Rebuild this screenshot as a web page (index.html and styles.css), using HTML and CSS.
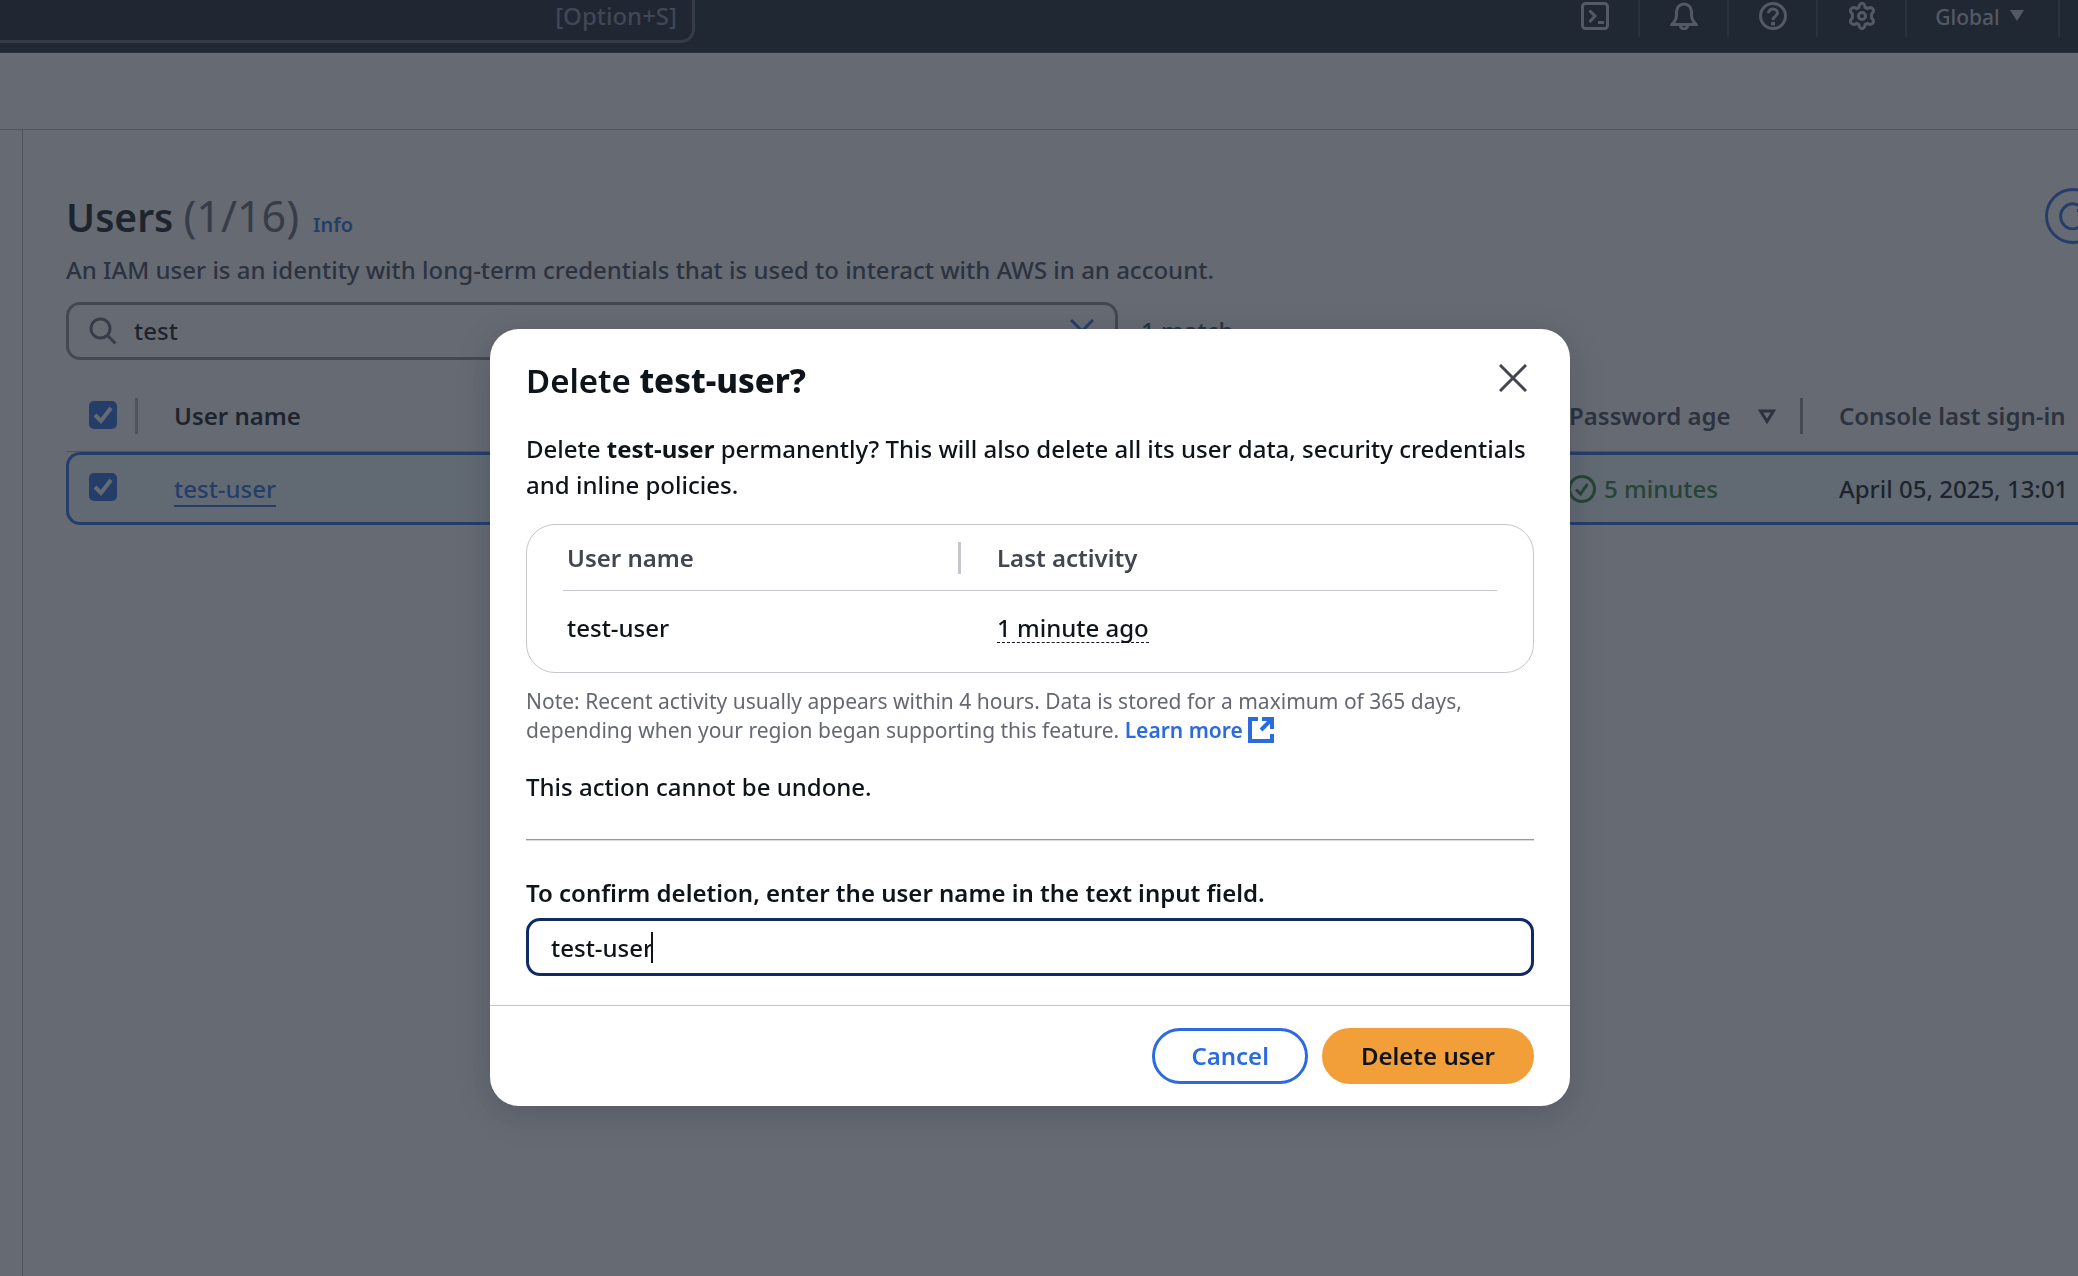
FILE: index.html
```html
<!DOCTYPE html>
<html lang="en">
<head>
<meta charset="utf-8">
<title>Users | IAM | Global</title>
<link rel="stylesheet" href="styles.css">
</head>
<body>
<header class="topbar">
  <div class="topsearch"><kbd>[Option+S]</kbd></div>
  <nav class="tools" aria-label="Console tools">
    <button class="tool" aria-label="CloudShell"><svg class="icon" viewBox="0 0 28 28"><rect x="1.5" y="1.5" width="25" height="25" rx="3"/><path d="M8.5 8.500l5.500 5.500-5.500 6M17 20.500h6"/></svg></button>
    <button class="tool" aria-label="Notifications"><svg class="icon" viewBox="0 0 28 28"><path d="M2 22.500c3-3 4.500-5 4.500-9.500v-3a7.500 8 0 0 1 15 0v3c0 4.500 1.500 6.500 4.500 9.500zM10.500 23.500a3.500 3.500 0 0 0 7 0"/></svg></button>
    <button class="tool" aria-label="Help"><svg class="icon" viewBox="0 0 28 28"><circle cx="14" cy="14" r="12.500"/><path d="M9.500 11.200c0-5.800 9.300-5.600 9 0-.2 3-4.500 3-4.500 7"/><path d="M14 20v3.500" stroke-width="4"/></svg></button>
    <button class="tool" aria-label="Settings"><svg class="icon" viewBox="0 0 28 28"><path d="M11.500 3q2.500-3.500 5 0l.6 2.400 2.200 1.100 2.400-.9q4.600.3 3.600 4.400l-1.700 2v4l1.700 2q1 4.100-3.600 4.400l-2.400-.9-2.200 1.100-.6 2.400q-2.500 3.500-5 0l-.6-2.400-2.200-1.100-2.400.9q-4.600-.3-3.600-4.400l1.700-2v-4l-1.700-2q-1-4.100 3.600-4.400l2.400.9 2.200-1.100z"/><circle cx="14" cy="14" r="3.500"/></svg></button>
    <button class="tool region">Global <svg class="caret-down" viewBox="0 0 14 11"><path d="M0 0h14L7 11z"/></svg></button>
  </nav>
</header>
<div class="crumbs"></div>
<div class="shell">
  <aside class="rail"></aside>
  <main class="main">
    <section class="panel">
      <div class="panel-head">
        <div>
          <div class="title-row">
            <h1>Users <span class="count">(1/16)</span></h1>
            <a class="info" href="#info">Info</a>
          </div>
          <p class="desc">An IAM user is an identity with long-term credentials that is used to interact with AWS in an account.</p>
        </div>
        <button class="refresh" aria-label="Refresh"><svg class="icon" viewBox="0 0 28 28"><path d="M25 18.500A12 12.500 0 1 1 24 8M25.500 1V8.500H18"/></svg></button>
      </div>
      <div class="filter">
        <div class="filter-box">
          <svg class="icon" viewBox="0 0 28 28"><circle cx="11.500" cy="11.500" r="9.500"/><path d="M18.500 18.500l8 8"/></svg>
          <input type="text" class="filter-input" aria-label="Find users" value="test">
          <button class="clear" aria-label="Clear"><svg class="icon" viewBox="0 0 28 28"><path d="M3 3l22 22M25 3L3 25"/></svg></button>
        </div>
        <span class="matches">1 match</span>
      </div>
      <table class="users">
        <colgroup><col class="c-sel"><col><col class="c-age"><col class="c-sign"></colgroup>
        <thead>
          <tr>
            <th><span class="cell cell-sel"><input type="checkbox" class="check" aria-label="Select all users" checked></span></th>
            <th class="sorted"><span class="cell">User name</span></th>
            <th><span class="cell cell-age">Password age <svg class="sort" viewBox="0 0 18 15"><path d="M2.500 2h13L9 12.500z"/></svg></span></th>
            <th><span class="cell">Console last sign-in</span></th>
          </tr>
        </thead>
        <tbody>
          <tr>
            <td class="sel"><input type="checkbox" class="check" aria-label="Select test-user" checked></td>
            <td><a class="user" href="#test-user">test-user</a></td>
            <td class="age"><span class="status"><svg class="icon" viewBox="0 0 28 28"><circle cx="14" cy="14" r="12.500"/><path d="M8 14.500l4.500 4.500 7-10"/></svg>5 minutes</span></td>
            <td>April 05, 2025, 13:01</td>
          </tr>
        </tbody>
      </table>
    </section>
  </main>
</div>

<div class="overlay">
  <div class="modal" role="dialog" aria-modal="true" aria-labelledby="modal-title">
    <div class="modal-head">
      <h2 id="modal-title">Delete <b>test-user?</b></h2>
      <button class="close" aria-label="Close"><svg class="icon" viewBox="0 0 28 28"><path d="M1 1l26 26M27 1L1 27"/></svg></button>
    </div>
    <div class="modal-body">
      <p>Delete <b>test-user</b> permanently? This will also delete all its user data, security credentials and inline policies.</p>
      <div class="card">
        <table class="activity">
          <thead><tr><th><span class="cell">User name</span></th><th>Last activity</th></tr></thead>
          <tbody><tr><td>test-user</td><td><span class="ago">1 minute ago</span></td></tr></tbody>
        </table>
      </div>
      <p class="note">Note: Recent activity usually appears within 4 hours. Data is stored for a maximum of 365 days, depending when your region began supporting this feature. <a class="learn" href="#learn">Learn more <svg class="ext" viewBox="0 0 26 26"><path d="M10 2H2v22h22v-7M14 2h10v10M24 2L13 13"/></svg></a></p>
      <p class="final">This action cannot be undone.</p>
      <hr class="rule">
      <label class="confirm-label" for="confirm">To confirm deletion, enter the user name in the text input field.</label>
      <div class="confirm-box">
        <input class="confirm" id="confirm" type="text" value="test-user">
        <span class="text-caret"></span>
      </div>
    </div>
    <div class="modal-foot">
      <button class="btn">Cancel</button>
      <button class="btn primary">Delete user</button>
    </div>
  </div>
</div>
</body>
</html>
```
FILE: styles.css
```css
* { box-sizing: border-box; }
body {
  margin: 0;
  height: 100vh;
  display: flex;
  flex-direction: column;
  overflow: hidden;
  background: #fff;
  color: #0f141a;
  font: 500 24px/36px "Noto Sans", "Open Sans", sans-serif;
}
h1, h2, p { margin: 0; }
button, input { font: inherit; color: inherit; }
button { padding: 0; border: 0; background: none; }
a { color: #2b6bdd; text-decoration: none; }
table { width: 100%; border-collapse: separate; border-spacing: 0; table-layout: fixed; }
th, td { padding: 0; text-align: left; white-space: nowrap; }
.icon { display: block; flex: none; width: 28px; height: 28px; fill: none; stroke: currentColor; stroke-width: 3; }

/* top navigation */
.topbar {
  display: flex;
  justify-content: space-between;
  align-items: flex-start;
  height: 53px;
  background: #1a222c;
  border-bottom: 1px solid #424650;
}
.topsearch {
  display: flex;
  justify-content: flex-end;
  align-items: center;
  width: 695px;
  height: 43px;
  padding-right: 15px;
  padding-bottom: 8px;
  border: solid #5f6470;
  border-width: 0 3px 3px 0;
  border-radius: 0 0 14px 0;
  background: #1a1d26;
}
.topsearch kbd { color: #85899a; font: inherit; }
.tools { display: flex; margin-right: 18px; }
.tool {
  display: flex;
  justify-content: center;
  width: 89px;
  height: 37px;
  padding-top: 2px;
  border-right: 2px solid #3c404b;
  color: #c6c6cd;
}
.region { width: 153px; padding-right: 6px; gap: 10px; font-size: 21px; line-height: 30px; }
.caret-down { width: 14px; height: 11px; margin-top: 8px; fill: currentColor; }
.crumbs { height: 77px; border-bottom: 1px solid #b4b4bb; }

/* page */
.shell { flex: 1; display: flex; min-height: 0; }
.rail { width: 23px; border-right: 1px solid #b4b4bb; }
.main { flex: 1; min-width: 0; overflow: hidden; }
.panel { margin: 58px -60px 0 43px; }
.panel-head { display: flex; justify-content: space-between; align-items: flex-start; padding-right: 37px; }
.title-row { display: flex; align-items: baseline; gap: 14px; height: 64px; }
h1 { font-size: 39px; line-height: 56px; font-weight: 650; }
.count { color: #656871; font-size: 43px; font-weight: 400; }
.info { font-size: 20px; font-weight: 650; }
.desc { color: #424650; }
.refresh {
  display: flex;
  align-items: center;
  justify-content: center;
  width: 56px;
  height: 56px;
  border: 3px solid #2b6bdd;
  border-radius: 50%;
  color: #2b6bdd;
}
.filter { display: flex; align-items: center; gap: 23px; margin-top: 14px; }
.filter-box {
  display: flex;
  align-items: center;
  gap: 17px;
  width: 1052px;
  height: 58px;
  padding: 0 19px 0 20px;
  border: 3px solid #8c8c94;
  border-radius: 14px;
  color: #656871;
}
.filter-input { flex: 1; min-width: 0; padding: 0; border: 0; outline: 0; background: none; color: #0f141a; }
.clear { color: #2b6bdd; }
.matches { color: #424650; }

.users { margin-top: 21px; }
.c-sel { width: 72px; }
.c-age { width: 263px; }
.c-sign { width: 335px; }
.users th { height: 71px; border-bottom: 1px solid #b4b4bb; color: #424650; font-weight: 650; }
.users .sorted { color: #0f141a; }
.users .cell { display: flex; align-items: center; height: 36px; padding-left: 36px; }
.users .cell-sel { padding-left: 23px; border-right: 3px solid #b4b4bb; }
.users .cell-age { justify-content: space-between; padding-left: 29px; padding-right: 24px; border-right: 3px solid #8c8c94; }
.sort { width: 18px; height: 15px; fill: none; stroke: currentColor; stroke-width: 3; }
.users td { height: 73px; padding-left: 36px; border: solid #2b6bdd; border-width: 3px 0; background: #f0fbff; }
.users .sel { padding-left: 20px; border-left-width: 3px; border-radius: 14px 0 0 14px; }
.users .age { padding-left: 28px; }
.status { display: flex; align-items: center; gap: 8px; color: #2b8030; }
.user { border-bottom: 2px solid; }
.check {
  appearance: none;
  display: block;
  width: 28px;
  height: 28px;
  margin: 0 0 3px;
  border-radius: 5px;
  background: #2b6bdd url("data:image/svg+xml,%3Csvg xmlns='http://www.w3.org/2000/svg' viewBox='0 0 28 28'%3E%3Cpath d='M6 14l6 6L22 7' fill='none' stroke='white' stroke-width='4'/%3E%3C/svg%3E");
}

/* dialog */
.overlay {
  position: fixed;
  inset: 0;
  display: flex;
  justify-content: center;
  align-items: flex-start;
  padding: 329px 18px 0 0;
  background: rgba(35, 43, 55, .7);
}
.modal {
  width: min(1080px, 100%);
  border-radius: 29px;
  background: #fff;
  box-shadow: 0 8px 36px rgba(0, 7, 22, .16);
}
.modal-head { display: flex; justify-content: space-between; align-items: flex-start; padding: 28px 43px 0 36px; }
h2 { font-size: 33px; line-height: 48px; font-weight: 650; }
h2 b { font-weight: 800; }
.close { margin-top: 7px; color: #424650; }
.modal-body { padding: 26px 36px 29px; }
.modal-body b { font-weight: 700; }
.card { margin-top: 21px; padding: 0 36px 8px; border: 1px solid #c6c6cd; border-radius: 29px; }
.activity th { height: 66px; padding-left: 4px; border-bottom: 1px solid #c6c6cd; color: #424650; font-weight: 650; }
.activity th:first-child { width: 398px; }
.activity th + th, .activity td + td { padding-left: 36px; }
.activity .cell { display: block; border-right: 3px solid #c6c6cd; line-height: 32px; }
.activity td { height: 73px; padding-left: 4px; }
.ago { border-bottom: 1px dashed; display: inline-block; line-height: 28px; }
.note { margin-top: 14px; color: #656871; font-size: 21px; line-height: 29px; font-weight: 450; }
.learn { font-weight: 650; }
.ext { width: 26px; height: 26px; vertical-align: -5px; fill: none; stroke: currentColor; stroke-width: 4; }
.final { margin-top: 24px; }
.rule { height: 2px; margin: 34px 0; border: solid; border-width: 1px 0; border-color: #999 #ddd #ddd; }
.confirm-label { display: block; font-weight: 650; }
.confirm-box { position: relative; margin-top: 7px; }
.confirm {
  display: block;
  width: 100%;
  height: 58px;
  padding: 0 22px;
  border: 3px solid #0f2b66;
  border-radius: 14px;
  outline: 0;
}
.text-caret { position: absolute; left: 125px; top: 14px; width: 2px; height: 31px; background: #0f141a; }
.modal-foot { display: flex; justify-content: flex-end; gap: 14px; padding: 22px 36px; border-top: 1px solid #c6c6cd; }
.btn { height: 56px; padding: 0 36px; border: 3px solid #2b6bdd; border-radius: 28px; color: #2b6bdd; font-weight: 650; }
.primary { border-color: #f29f3a; background: #f29f3a; color: #0f141a; }
```
